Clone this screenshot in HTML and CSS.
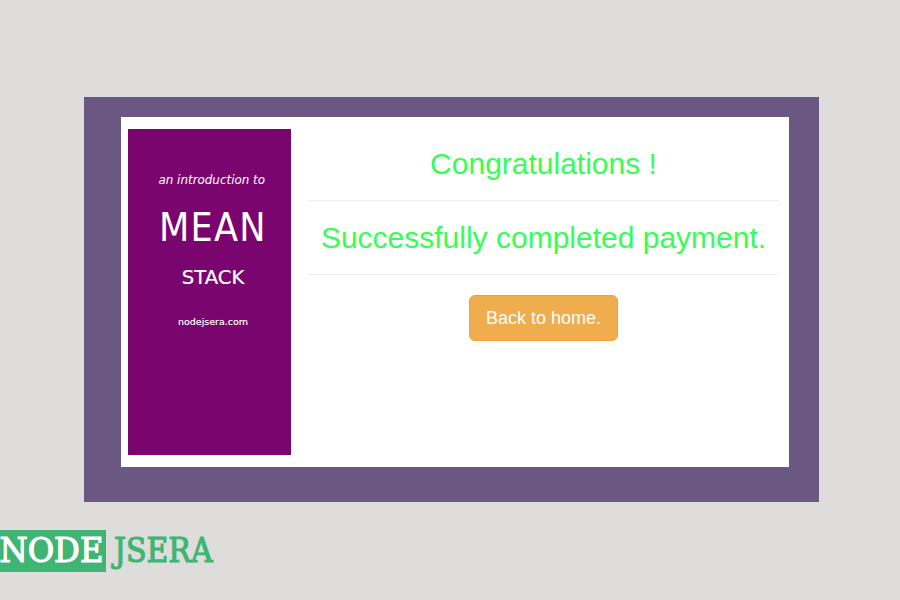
FILE: index.html
```html
<!DOCTYPE html>
<html lang="en">
<head>
<meta charset="utf-8">
<title>Payment completed</title>
<link rel="stylesheet" href="styles.css">
</head>
<body>
<main class="frame">
  <section class="card">
    <svg class="cover" width="163" height="326" viewBox="0 0 163 326">
      <rect class="cover-bg" width="163" height="326"/>
      <text class="intro" x="30.5" y="55" textLength="106.5" lengthAdjust="spacingAndGlyphs">an introduction to</text>
      <text class="title" x="31" y="111.5" textLength="107.5" lengthAdjust="spacing">MEAN</text>
      <text class="subtitle" x="53.8" y="155.3" textLength="62.5" lengthAdjust="spacingAndGlyphs">STACK</text>
      <text class="site" x="50" y="196" textLength="70">nodejsera.com</text>
    </svg>
    <div class="message">
      <h2>Congratulations !</h2>
      <hr>
      <h2>Successfully completed payment.</h2>
      <hr>
      <a class="button" href="#">Back to home.</a>
    </div>
  </section>
</main>
<footer>
  <svg class="logo" width="220" height="60" viewBox="0 0 220 60">
    <rect class="logo-box" width="106" height="42"/>
    <text class="logo-node" x="-0.5" y="31.5" textLength="104" lengthAdjust="spacingAndGlyphs">NODE</text>
    <text class="logo-jsera" x="114" y="31.5" textLength="98.5" lengthAdjust="spacingAndGlyphs">JSERA</text>
  </svg>
</footer>
</body>
</html>
```
FILE: styles.css
```css
* { box-sizing: border-box; }
body {
  margin: 0;
  height: 600px;
  padding-top: 97px;
  overflow: hidden;
  background: #dedddb;
  font-family: "Liberation Sans", Arial, sans-serif;
}
.frame {
  width: 735px;
  height: 405px;
  margin-left: 84px;
  padding: 20px 30px 35px 37px;
  background: #6a5883;
}
.card {
  display: flex;
  gap: 17px;
  height: 350px;
  padding: 12px 10px 12px 7px;
  background: #fff;
}
.cover { flex: none; }
.cover-bg { fill: #7b056f; }
.cover text { fill: #fff; font-family: "DejaVu Sans", sans-serif; }
.cover .intro { font-size: 11.5px; font-style: italic; }
.cover .title { font-size: 39px; font-stretch: condensed; letter-spacing: 1px; }
.cover .subtitle { font-size: 19.5px; stroke: #fff; stroke-width: 0.2px; }
.cover .site { font-size: 9.5px; stroke: #fff; stroke-width: 0.15px; }
.message { flex: 1; padding-top: 18px; text-align: center; }
h2 {
  margin: 0 0 20px;
  font-size: 30px;
  font-weight: 400;
  line-height: 33px;
  color: #33ff55;
  white-space: nowrap;
}
hr { margin: 20px 0; border: 0; border-top: 1px solid #eee; }
.button {
  display: inline-block;
  height: 46px;
  padding: 10px 16px;
  border: 1px solid #eea236;
  border-radius: 6px;
  background: #f0ad4e;
  color: #fff;
  font-size: 18px;
  line-height: 24px;
  text-decoration: none;
}
footer { margin-top: 28px; }
.logo { display: block; overflow: visible; }
.logo text {
  font-family: "DejaVu Serif", serif;
  font-size: 33px;
  stroke-width: 1.2px;
}
.logo-box { fill: #3eb572; }
.logo .logo-jsera { fill: #3eb572; stroke: #3eb572; }
.logo .logo-node { fill: #fff; stroke: #fff; }
```
